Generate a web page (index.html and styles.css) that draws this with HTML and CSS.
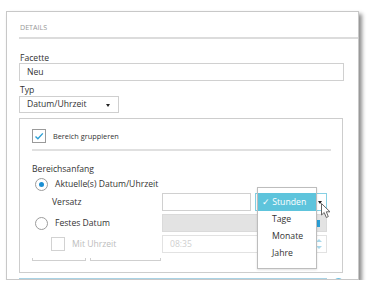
FILE: index.html
```html
<!DOCTYPE html>
<html lang="de">
<head>
    <meta charset="UTF-8">
    <title>Details</title>
    <link rel="stylesheet" href="styles.css">
</head>
<body>
    <div class="panel">
        <div class="panel-head">DETAILS</div>

        <div class="panel-body">
            <div class="label label-first">Facette</div>
            <div class="input">Neu</div>

            <div class="label">Typ</div>
            <div class="select">Datum/Uhrzeit<span class="caret"></span></div>

            <div class="group">
                <div class="check-row">
                    <span class="checkbox">
                        <svg width="14" height="14" viewBox="0 0 14 14"><path d="M3.5 7.4 L5.9 9.8 L10.8 4.4" fill="none" stroke="#2a9fd6" stroke-width="1.4"/></svg>
                    </span>
                    <span class="small-text">Bereich gruppieren</span>
                </div>
                <div class="rule"></div>

                <div class="label-sub">Bereichsanfang</div>

                <div class="radio-row">
                    <span class="radio checked"></span>
                    <span>Aktuelle(s) Datum/Uhrzeit</span>
                </div>

                <div class="row row-versatz">
                    <div class="row-label indent">Versatz</div>
                    <div class="row-ctrl">
                        <div class="input short"></div>
                        <div class="unit-select">
                            <span class="caret caret-unit"></span>
                            <ul class="menu">
                                <li class="active">✓ Stunden</li>
                                <li>Tage</li>
                                <li>Monate</li>
                                <li>Jahre</li>
                            </ul>
                            <svg class="cursor" width="11" height="16" viewBox="0 0 11 16"><path d="M0.5 0.5 L0.5 12 L3.2 9.5 L5.3 14.5 L7.3 13.6 L5.3 8.8 L9 8.8 Z" fill="#fff" stroke="#666" stroke-width="1"/></svg>
                        </div>
                    </div>
                </div>

                <div class="row">
                    <div class="row-label radio-label">
                        <span class="radio"></span>
                        <span>Festes Datum</span>
                    </div>
                    <div class="row-ctrl">
                        <div class="input wide disabled"><span class="cal-btn"></span></div>
                    </div>
                </div>

                <div class="row">
                    <div class="row-label check-label">
                        <span class="checkbox off"></span>
                        <span class="muted">Mit Uhrzeit</span>
                    </div>
                    <div class="row-ctrl">
                        <div class="input wide time">08:35
                            <span class="spin">
                                <span class="spin-up"></span>
                                <span class="spin-down"></span>
                            </span>
                        </div>
                    </div>
                </div>

                <div class="ends">
                    <span class="end end-a"></span>
                    <span class="end end-b"></span>
                </div>
            </div>

            <div class="next-row">
                <div class="next-box"><span class="next-split"></span></div>
                <span class="next-circle"></span>
            </div>
        </div>
    </div>
</body>
</html>
```

FILE: styles.css
```css
body {
    margin: 0;
    background: #fff;
    font-family: "Open Sans", Arial, sans-serif;
    color: #333;
    font-size: 8.6px;
}
.panel {
    margin: 11px 0 0 6px;
    width: 353px;
    height: 269px;
    box-sizing: border-box;
    border: 1px solid #c8c8c8;
    background: #fff;
    box-shadow: 3px 3px 4px rgba(0, 0, 0, 0.45);
    overflow: hidden;
}
.panel-head {
    margin-left: 12px;
    padding: 10px 0 5px 1px;
    line-height: 10px;
    font-size: 7.1px;
    color: #999;
    border-bottom: 2px solid #dcdcdc;
}
.panel-body {
    padding: 0 14px 0 12px;
}
.label {
    margin-top: 4px;
    padding-left: 1px;
    line-height: 11px;
}
.label-first {
    margin-top: 14px;
    line-height: 10px;
}
.input {
    height: 18px;
    box-sizing: border-box;
    border: 1px solid #d0d0d0;
    padding-left: 7px;
    line-height: 16px;
    background: #fff;
    position: relative;
}
.select {
    width: 100px;
    height: 17px;
    box-sizing: border-box;
    border: 1px solid #cfcfcf;
    padding-left: 7px;
    line-height: 15px;
    position: relative;
}
.caret {
    position: absolute;
    right: 8px;
    top: 7px;
    border-left: 2.5px solid transparent;
    border-right: 2.5px solid transparent;
    border-top: 3px solid #222;
}

/* group box */
.group {
    margin-top: 5px;
    width: 324px;
    height: 155px;
    box-sizing: border-box;
    border: 1px solid #cdcdcd;
    padding: 10px 0 0 12px;
}
.check-row {
    display: flex;
    align-items: center;
    height: 14px;
}
.checkbox {
    width: 14px;
    height: 14px;
    box-sizing: border-box;
    border: 1px solid #9a9a9a;
    display: inline-block;
    flex: none;
}
.checkbox svg {
    display: block;
    margin: -1px;
}
.checkbox.off {
    border-color: #d2d2d2;
}
.small-text {
    font-size: 7.35px;
    margin-left: 7px;
}
.rule {
    margin-top: 6px;
    width: 299px;
    height: 2px;
    background: #e0e0e0;
}
.label-sub {
    margin-top: 13px;
    line-height: 10px;
}
.radio-row {
    margin-top: 3px;
    height: 14px;
    display: flex;
    align-items: center;
    padding-left: 3px;
}
.radio {
    width: 13px;
    height: 13px;
    box-sizing: border-box;
    border: 1px solid #9c9c9c;
    border-radius: 50%;
    margin-right: 7px;
    flex: none;
    position: relative;
}
.radio.checked::after {
    content: "";
    position: absolute;
    left: 3px;
    top: 3px;
    width: 5px;
    height: 5px;
    border-radius: 50%;
    background: #1b8fd3;
}
.row {
    margin-top: 3px;
    display: flex;
    height: 18px;
}
.row-versatz {
    margin-top: 2px;
}
.row-label {
    width: 130px;
    display: flex;
    align-items: center;
}
.indent {
    padding-left: 20px;
    box-sizing: border-box;
}
.radio-label {
    padding-left: 3px;
    box-sizing: border-box;
}
.check-label {
    padding-left: 19px;
    box-sizing: border-box;
}
.check-label .checkbox {
    margin-right: 7px;
}
.muted {
    color: #bdbdbd;
}
.row-ctrl {
    display: flex;
    width: 165px;
}
.input.short {
    width: 89px;
}
.input.wide {
    width: 165px;
}
.input.disabled {
    background: #e3e3e3;
    border-color: #dadada;
}
.cal-btn {
    position: absolute;
    right: 6px;
    top: 5px;
    width: 6px;
    height: 7px;
    background: #2a9fd6;
}
.input.time {
    color: #cfcfcf;
    border-color: #e2e2e2;
}
.spin {
    position: absolute;
    right: 4px;
    top: 3px;
    display: flex;
    flex-direction: column;
    gap: 4px;
}
.spin-up {
    border-left: 3px solid transparent;
    border-right: 3px solid transparent;
    border-bottom: 3px solid #a9d9ec;
}
.spin-down {
    border-left: 3px solid transparent;
    border-right: 3px solid transparent;
    border-top: 3px solid #a9d9ec;
}
.unit-select {
    margin-left: 4px;
    width: 72px;
    box-sizing: border-box;
    border: 1px solid #86d0e4;
    position: relative;
    z-index: 10;
}
.caret-unit {
    right: 4px;
    top: 7px;
}
.menu {
    position: absolute;
    left: 1px;
    top: -7px;
    width: 60px;
    height: 82px;
    box-sizing: border-box;
    margin: 0;
    padding: 5px 0 0;
    list-style: none;
    background: #fff;
    border: 1px solid #bdbdbd;
    box-shadow: 0 1px 2px rgba(0, 0, 0, 0.12);
}
.menu li {
    height: 17px;
    line-height: 17px;
    padding-left: 14px;
    font-size: 8.7px;
}
.menu li.active {
    height: 18px;
    line-height: 18px;
    padding-left: 4px;
    background: #5ec4dc;
    color: #fff;
}
.cursor {
    position: absolute;
    left: 65px;
    top: 9px;
}
.ends {
    margin-top: 5px;
    display: flex;
    gap: 4px;
}
.end {
    height: 2px;
    border: 1px solid #cfcfcf;
    border-top: none;
}
.end-a {
    width: 52px;
}
.end-b {
    width: 69px;
}
.next-row {
    margin-top: 5px;
    display: flex;
    gap: 6px;
}
.next-box {
    width: 324px;
    height: 12px;
    box-sizing: border-box;
    border: 1px solid #a9d3e5;
    background: #f4fafd;
    position: relative;
}
.next-split {
    position: absolute;
    left: 162px;
    top: 0;
    width: 1px;
    height: 10px;
    background: #c7e2ee;
}
.next-circle {
    width: 12px;
    height: 12px;
    box-sizing: border-box;
    border: 1px solid #6cc0e2;
    border-radius: 50%;
}
```
